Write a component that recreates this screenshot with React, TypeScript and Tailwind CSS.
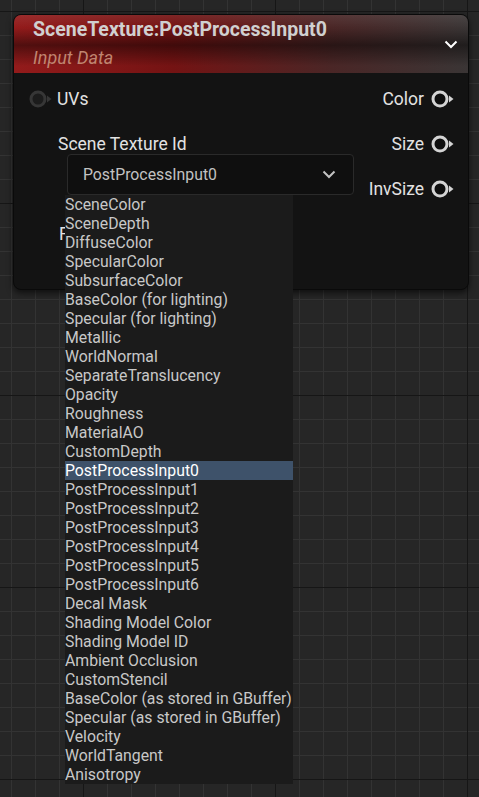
import React from "react";

const options = [
  "SceneColor",
  "SceneDepth",
  "DiffuseColor",
  "SpecularColor",
  "SubsurfaceColor",
  "BaseColor (for lighting)",
  "Specular (for lighting)",
  "Metallic",
  "WorldNormal",
  "SeparateTranslucency",
  "Opacity",
  "Roughness",
  "MaterialAO",
  "CustomDepth",
  "PostProcessInput0",
  "PostProcessInput1",
  "PostProcessInput2",
  "PostProcessInput3",
  "PostProcessInput4",
  "PostProcessInput5",
  "PostProcessInput6",
  "Decal Mask",
  "Shading Model Color",
  "Shading Model ID",
  "Ambient Occlusion",
  "CustomStencil",
  "BaseColor (as stored in GBuffer)",
  "Specular (as stored in GBuffer)",
  "Velocity",
  "WorldTangent",
  "Anisotropy",
];

function Pin({ output }: { output?: boolean }) {
  const c = output ? "#d4d4d4" : "#363636";
  return (
    <svg width="24" height="18" viewBox="0 0 24 18" className="shrink-0">
      <circle cx="9" cy="9" r="7" fill={output ? "#0e0e0e" : "#1c1c1c"} stroke={c} strokeWidth="3" />
      <path d="M18 5.5 L22.5 9 L18 12.5 Z" fill={c} />
    </svg>
  );
}

function Chevron({ className }: { className?: string }) {
  return (
    <svg width="14" height="9" viewBox="0 0 14 9" className={className}>
      <path d="M1.5 1.5 L7 7 L12.5 1.5" fill="none" stroke="currentColor" strokeWidth="2" />
    </svg>
  );
}

export default function App() {
  return (
    <div className="relative h-[797px] w-[479px] overflow-hidden bg-[#262626] bg-[linear-gradient(to_right,#161616_1px,transparent_1px),linear-gradient(to_bottom,#161616_1px,transparent_1px),linear-gradient(to_right,#333333_1px,transparent_1px),linear-gradient(to_bottom,#333333_1px,transparent_1px)] bg-[size:192px_192px,192px_192px,24px_24px,24px_24px] bg-[position:83px_0px,0px_11px,11px_0px,0px_11px] pt-[14px] pl-[13px] font-['Roboto',sans-serif]">
      {/* Node */}
      <div className="relative w-[456px] rounded-[8px] border border-[#0a0a0a] bg-[#131313] shadow-[0_3px_6px_rgba(0,0,0,0.6)]">
        <div className="relative h-[58px] overflow-hidden rounded-t-[7px] bg-[linear-gradient(to_right,#931b1b_0%,#741313_35%,#4a2626_70%,#3a3535_100%)]">
          <div className="absolute inset-0 bg-[linear-gradient(to_bottom,rgba(255,255,255,0.08)_0%,transparent_22%,rgba(0,0,0,0.45)_52%,transparent_88%)]" />
          <div className="relative flex items-start justify-between pl-[19px] pr-[10px] pt-[3px]">
            <div className="flex flex-col gap-[5px]">
              <span className="text-[19.5px] font-bold leading-[24px] text-[#d0d0d0]">
                SceneTexture:PostProcessInput0
              </span>
              <span className="text-[18px] italic leading-[22px] text-[#c08570]">
                Input Data
              </span>
            </div>
            <Chevron className="mt-[22px] text-white" />
          </div>
        </div>

        <div className="flex justify-between pt-[14px] pb-[43px]">
          <div className="flex flex-col">
            <div className="flex h-[24px] items-center gap-[4px] pl-[15px]">
              <Pin />
              <span className="text-[17.5px] text-[#e2e2e2]">UVs</span>
            </div>
            <div className="mt-[21px] flex h-[24px] items-center pl-[44px]">
              <span className="text-[17.5px] text-[#e2e2e2]">Scene Texture Id</span>
            </div>
            <div className="ml-[53px] mt-[-2px] flex h-[41px] w-[287px] items-center justify-between rounded-[4px] border border-[#2a2a2a] bg-[#0f0f0f] pl-[15px] pr-[17px]">
              <span className="text-[15.8px] text-[#c2c2c2]">PostProcessInput0</span>
              <Chevron className="text-[#c2c2c2]" />
            </div>
            <div className="mt-[27px] flex h-[24px] items-center pl-[45px]">
              <span className="text-[17.5px] text-[#e2e2e2]">F</span>
            </div>
          </div>

          <div className="flex flex-col items-end gap-[21px] pr-[13px]">
            {["Color", "Size", "InvSize"].map((label) => (
              <div key={label} className="flex h-[24px] items-center gap-[7px]">
                <span className="text-[17.5px] text-[#e2e2e2]">{label}</span>
                <Pin output />
              </div>
            ))}
          </div>
        </div>
      </div>

      {/* Dropdown list */}
      <div className="absolute left-[65px] top-[195px] w-[228px] bg-[#1b1b1b]">
        {options.map((opt) => (
          <div
            key={opt}
            className={
              opt === "PostProcessInput0"
                ? "h-[19px] bg-[#3e526a] text-[15.8px] leading-[19px] text-white"
                : "h-[19px] text-[15.8px] leading-[19px] text-[#c8c8c8]"
            }
          >
            {opt}
          </div>
        ))}
      </div>
    </div>
  );
}
